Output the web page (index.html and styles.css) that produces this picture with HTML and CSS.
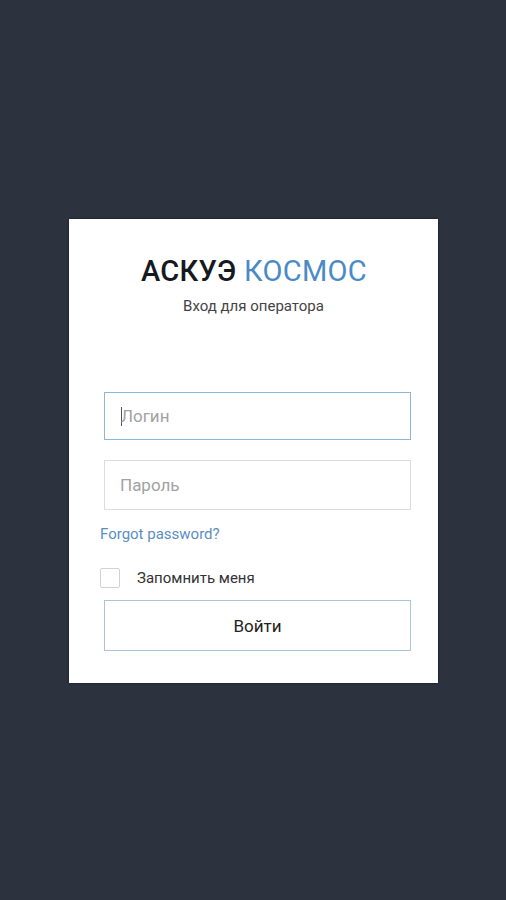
FILE: index.html
```html
<!DOCTYPE html>
<html lang="ru">
<head>
  <meta charset="UTF-8">
  <meta name="viewport" content="width=device-width, initial-scale=1.0">
  <title>АСКУЭ КОСМОС</title>
  <link rel="stylesheet" href="styles.css">
</head>
<body>
  <div class="login">
    <h1><span class="brand">АСКУЭ</span> <span class="accent">КОСМОС</span></h1>
    <p class="subtitle">Вход для оператора</p>

    <form class="login-form">
      <div class="field focused"><span class="caret"></span><span class="placeholder">Логин</span></div>
      <div class="field"><span class="placeholder">Пароль</span></div>
      <a class="forgot" href="#">Forgot password?</a>
      <label class="remember">
        <span class="checkbox"></span>
        <span>Запомнить меня</span>
      </label>
      <button type="button">Войти</button>
    </form>
  </div>
</body>
</html>
```

FILE: styles.css
```css
body {
  font-family: Roboto, "Noto Sans", Arial, sans-serif;
  background-color: #2c333e;
  margin: 0;
  padding: 219px 0 0 69px;
  height: 900px;
  box-sizing: border-box;
}
.login {
  width: 369px;
  height: 464px;
  box-sizing: border-box;
  background-color: #fff;
  padding: 36px 27px 0 31px;
  box-shadow: 0 0 2px rgba(0, 0, 0, 0.6);
}
h1 {
  margin: 0;
  text-align: center;
  font-size: 29px;
  font-weight: 500;
  line-height: 32px;
  letter-spacing: 0.3px;
  padding-right: 3px;
}
.brand {
  color: #16191d;
}
.accent {
  color: #4a8ac6;
  font-weight: 400;
}
.subtitle {
  margin: 10px 0 0;
  text-align: center;
  font-size: 15px;
  color: #444;
  padding-right: 4px;
}
.login-form {
  margin-top: 77px;
  display: flex;
  flex-direction: column;
}
.field {
  margin-left: 4px;
  height: 48px;
  border: 1px solid #dcdcdc;
  display: flex;
  align-items: center;
  padding-left: 15px;
  box-sizing: border-box;
  font-size: 17px;
  color: #a2a2a2;
}
.field + .field {
  margin-top: 20px;
  height: 50px;
}
.field.focused {
  border-color: #8fb5d6;
  padding-left: 16px;
}
.caret {
  width: 1px;
  height: 19px;
  background-color: #555;
  margin-right: -1px;
}
.forgot {
  margin-top: 15px;
  font-size: 15px;
  color: #5a8ec0;
  text-decoration: none;
}
.remember {
  margin-top: 25px;
  display: flex;
  align-items: center;
  font-size: 15px;
  color: #333;
}
.checkbox {
  width: 18px;
  height: 18px;
  border: 1px solid #d2d2d2;
  border-radius: 2px;
  margin-right: 17px;
}
button {
  margin: 12px 0 0 4px;
  height: 51px;
  border: 1px solid #a9c3d8;
  background-color: #fff;
  font-family: inherit;
  font-size: 17px;
  color: #222;
  cursor: pointer;
}
```
